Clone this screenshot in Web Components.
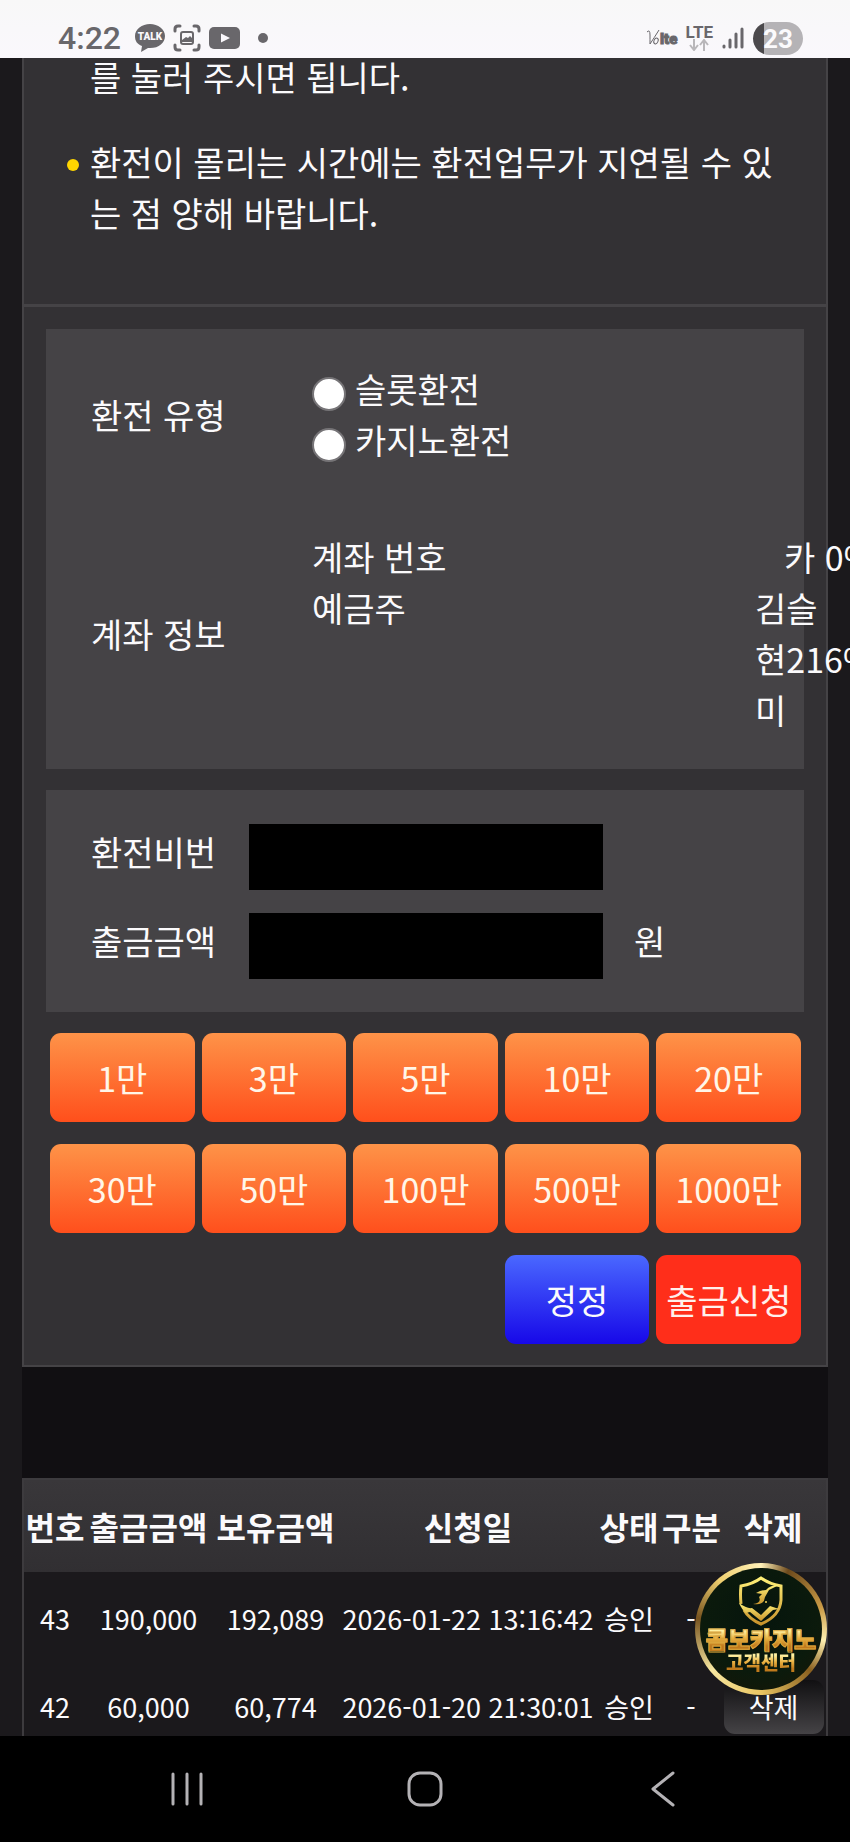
<!DOCTYPE html>
<html lang="ko">
<head>
<meta charset="utf-8">
<meta name="viewport" content="width=device-width, initial-scale=1">
<title>환전 신청</title>
<style>
  html, body { margin: 0; height: 100%; background: #1b191c; }
  body {
    font-family: "Noto Sans CJK KR", "Noto Sans", sans-serif;
    font-size: 34px;
    line-height: 51px;
    color: #fbfafc;
    --frame: #333134;
    --panel: #454346;
    --line: #454346;
  }
</style>
</head>
<body>
<app-shell>
  <status-bar slot="top"></status-bar>
  <page-frame>
    <notice-list>
      <notice-item plain>를 눌러 주시면 됩니다.</notice-item>
      <notice-item>환전이 몰리는 시간에는 환전업무가 지연될 수 있는 점 양해 바랍니다.</notice-item>
    </notice-list>
    <withdraw-form></withdraw-form>
  </page-frame>
  <history-table></history-table>
  <support-badge slot="float"></support-badge>
  <nav-bar slot="bottom"></nav-bar>
</app-shell>

<script>
const define = (name, html, setup) => {
  const template = document.createElement('template');
  template.innerHTML = html;
  customElements.define(name, class extends HTMLElement {
    constructor() {
      super();
      const root = this.attachShadow({ mode: 'open' });
      root.append(template.content.cloneNode(true));
      if (setup) setup(this, root);
    }
  });
};

define('app-shell', `
  <style>
    :host { display: flex; flex-direction: column; height: 100vh; overflow: hidden; }
    main { flex: 1; min-height: 0; overflow: hidden; position: relative; }
    .content { margin: -7px 22px 0; background: #110f12; }
    .float { position: absolute; right: 23px; bottom: 41px; }
  </style>
  <slot name="top"></slot>
  <main>
    <div class="content"><slot></slot></div>
    <div class="float"><slot name="float"></slot></div>
  </main>
  <slot name="bottom"></slot>`);

define('status-bar', `
  <style>
    :host {
      display: flex; align-items: center; justify-content: space-between;
      box-sizing: border-box; height: 58px; padding: 18px 47px 0 58px;
      background: linear-gradient(#f8f8f8, #faf8fc); color: #69676b;
      font-family: Roboto, sans-serif; line-height: 40px;
      position: relative; z-index: 1;
    }
    .group { display: flex; align-items: center; }
    .time { font-size: 32px; font-weight: 500; }
    svg { display: block; }
    .talk { margin-left: 14px; }
    .shot { margin-left: 8px; }
    .tube { margin-left: 8px; }
    .dot { width: 10px; height: 10px; border-radius: 50%; background: #69676b; margin-left: 18px; }
    .lte { margin: 0 9px 0 7px; display: grid; justify-items: center; font-size: 17px; font-weight: 700; line-height: 14px; }
    .battery {
      margin-left: 8px; width: 50px; height: 33px; border-radius: 17px; box-sizing: border-box;
      padding-left: 10px; line-height: 34px; font-size: 26px; font-weight: 700; color: #fbfafc;
      background: linear-gradient(90deg, #4b494c 11px, #b5b3b6 11px);
    }
  </style>
  <div class="group">
    <span class="time">4:22</span>
    <svg class="talk" width="30" height="28" viewBox="0 0 30 28">
      <path d="M15 0C7 0 0 5 0 12c0 5 2 8 7 10l-1 6 7-4c10 1 17-5 17-12S23 0 15 0z" fill="#69676b"/>
      <text x="15" y="16" font-family="Roboto" font-size="10" font-weight="900" fill="#faf8fc" text-anchor="middle">TALK</text>
    </svg>
    <svg class="shot" width="28" height="28" viewBox="0 0 28 28" fill="none" stroke="#69676b" stroke-width="3" stroke-linecap="round">
      <path d="M2 7V5q0-3 3-3h2M21 2h2q3 0 3 3v2M26 21v2q0 3-3 3h-2M7 26H5q-3 0-3-3v-2"/>
      <rect x="8" y="8" width="12" height="12" rx="2" stroke-width="2"/>
      <path d="M9 18v-2l4-3 2 1 2-2 2 2v4z" fill="#69676b" stroke="none"/>
    </svg>
    <svg class="tube" width="31" height="22" viewBox="0 0 31 22">
      <rect width="31" height="22" rx="5" fill="#69676b"/>
      <path d="M12 6.500l9 4.500-9 4.500z" fill="#faf8fc"/>
    </svg>
    <span class="dot"></span>
  </div>
  <div class="group">
    <svg width="33" height="18" viewBox="0 0 33 18" fill="#69676b">
      <path d="M1 3q3-3 3 3 0 5 0 9Q8 9 13 1" fill="none" stroke="#69676b" stroke-width="1"/>
      <ellipse cx="10" cy="12" rx="2" ry="3" fill="none" stroke="#69676b" transform="rotate(25 10 12)"/>
      <text x="14" y="15" font-family="Roboto" font-size="15" font-weight="900" stroke="#69676b" stroke-width="1">lte</text>
    </svg>
    <div class="lte">
      <span>LTE</span>
      <svg width="20" height="12" viewBox="0 0 20 12" fill="none" stroke="#b9b7ba" stroke-width="2">
        <path d="M5 0v10M1 6l4 5 4-5M15 12V2M11 6l4-5 4 5"/>
      </svg>
    </div>
    <svg width="23" height="24" viewBox="0 0 23 24" stroke="#69676b" stroke-width="3" stroke-linecap="round">
      <path d="M2 20v1M8 14v7M14 8v13M20 3v18"/>
    </svg>
    <div class="battery">23</div>
  </div>`);

define('page-frame', `
  <style>
    :host { display: block; background: var(--frame); border: 2px solid var(--line); border-top: 0; }
  </style>
  <slot></slot>`);

define('notice-list', `
  <style>
    :host { display: flex; flex-direction: column; gap: 34px; padding: 0 44px 66px 43px; border-bottom: 3px solid var(--line); }
  </style>
  <slot></slot>`);

define('notice-item', `
  <style>
    :host { display: grid; grid-template-columns: 12px 1fr; gap: 11px; word-break: break-all; }
    i { width: 12px; height: 12px; border-radius: 50%; background: #ffd600; margin-top: 23px; }
    :host([plain]) i { visibility: hidden; }
  </style>
  <i></i><span><slot></slot></span>`);

define('info-row', `
  <style>
    :host { display: grid; grid-template-columns: 221px minmax(0, 1fr); align-items: center; }
  </style>
  <slot name="name"></slot><div><slot></slot></div>`);

define('cash-field', `
  <style>
    :host { display: grid; grid-template-columns: 158px minmax(0, 354px) auto; align-items: center; }
    label, span { padding-bottom: 12px; }
    span span, ::slotted(span) { padding: 0; }
    span { padding-left: 31px; }
    input {
      box-sizing: border-box; width: 100%; height: 66px; padding: 0 16px; margin: 0;
      border: 0; border-radius: 0; background: #000; color: inherit; font: inherit;
    }
  </style>
  <label for="field"><slot></slot></label>
  <input id="field">
  <span><slot name="unit"></slot></span>`,
  (host, root) => {
    root.querySelector('input').type = host.getAttribute('type') || 'text';
  });

define('pad-button', `
  <style>
    :host { display: block; }
    button {
      display: block; width: 100%; height: 89px; padding: 0; border: 0; border-radius: 11px;
      background: linear-gradient(#fe9348, #ff4f1c); color: #fff6e8; font: inherit; white-space: nowrap;
    }
    :host([kind="reset"]) button { background: linear-gradient(#4a68ff, #1708e8); color: #fbfafc; }
    :host([kind="submit"]) button { background: #ff2e1a; color: #fff0ec; }
  </style>
  <button type="button"><slot></slot></button>`);

define('withdraw-form', `
  <style>
    :host { display: block; padding: 22px 22px 21px; }
    form { display: grid; gap: 21px; }
    section { background: var(--panel); padding: 34px 0 34px 45px; display: grid; gap: 66px; }
    section.fields { gap: 23px; padding-bottom: 33px; }
    .choice { display: flex; align-items: center; gap: 9px; }
    input {
      appearance: none; box-sizing: border-box; width: 34px; height: 34px; margin: 10px 0 0;
      border: 2px solid #767477; border-radius: 50%; background: #fff;
    }
    dl { margin: 0; display: grid; grid-template-columns: 443px auto; }
    dd { margin: 0; white-space: nowrap; }
    dd.number { padding-left: 29px; }
    .pad { display: grid; grid-template-columns: repeat(5, minmax(0, 1fr)); gap: 22px 7px; padding: 0 3px 0 4px; }
    pad-button[kind="reset"] { grid-column: 4; }
  </style>
  <form>
    <section>
      <info-row>
        <span slot="name">환전 유형</span>
        <label class="choice"><input type="radio" name="kind">슬롯환전</label>
        <label class="choice"><input type="radio" name="kind">카지노환전</label>
      </info-row>
      <info-row>
        <span slot="name">계좌 정보</span>
        <dl>
          <dt>계좌 번호</dt><dd class="number">카 0%</dd>
          <dt>예금주</dt><dd>김슬<br>현216%<br>미</dd>
        </dl>
      </info-row>
    </section>
    <section class="fields">
      <cash-field type="password">환전비번</cash-field>
      <cash-field>출금금액<span slot="unit">원</span></cash-field>
    </section>
    <div class="pad">
      <pad-button>1만</pad-button><pad-button>3만</pad-button><pad-button>5만</pad-button>
      <pad-button>10만</pad-button><pad-button>20만</pad-button>
      <pad-button>30만</pad-button><pad-button>50만</pad-button><pad-button>100만</pad-button>
      <pad-button>500만</pad-button><pad-button>1000만</pad-button>
      <pad-button kind="reset">정정</pad-button><pad-button kind="submit">출금신청</pad-button>
    </div>
  </form>`);

define('history-table', `
  <style>
    :host { display: block; margin-top: 111px; border: 2px solid #3d3b3e; background: #1b191c; }
    table { width: 100%; table-layout: fixed; border-collapse: collapse; text-align: center; white-space: nowrap; }
    th, td { padding: 0; }
    th { height: 92px; font-size: 32px; font-weight: 700; background: linear-gradient(#39373a, #312f32); }
    td { height: 82px; padding-top: 6px; font-size: 27px; line-height: 40px; }
    button {
      width: 100px; height: 54px; padding: 0; border: 0; border-radius: 11px; vertical-align: middle;
      background: linear-gradient(#111012, #454346); color: inherit; font: inherit; margin-left: 1px;
    }
  </style>
  <table>
    <colgroup>
      <col style="width:62px"><col style="width:125px"><col style="width:129px"><col>
      <col style="width:66px"><col style="width:58px"><col style="width:106px">
    </colgroup>
    <thead>
      <tr><th>번호</th><th>출금금액</th><th>보유금액</th><th>신청일</th><th>상태</th><th>구분</th><th>삭제</th></tr>
    </thead>
    <tbody>
      <tr><td>43</td><td>190,000</td><td>192,089</td><td>2026-01-22 13:16:42</td><td>승인</td><td>-</td><td></td></tr>
      <tr><td>42</td><td>60,000</td><td>60,774</td><td>2026-01-20 21:30:01</td><td>승인</td><td>-</td><td><button type="button">삭제</button></td></tr>
    </tbody>
  </table>`);

define('support-badge', `
  <style>
    :host { display: block; }
    a {
      display: flex; flex-direction: column; align-items: center; box-sizing: border-box;
      width: 132px; height: 132px; padding-top: 8px; border-radius: 50%; border: 5px solid transparent;
      background:
        radial-gradient(circle at 50% 40%, #06150d, #0b1a0c 60%, #191505) padding-box,
        conic-gradient(#fff1b8, #6d4a1c 25deg, #c99a45 70deg, #fff0b0 100deg, #8a6020 130deg, #e9c562 180deg, #f7e7a0 230deg, #77531f 280deg, #f0d070 320deg, #fff1b8) border-box;
      text-decoration: none; font-weight: 900; white-space: nowrap;
    }
    b, span {
      font-weight: 900; color: transparent; -webkit-background-clip: text; background-clip: text;
      background-image: linear-gradient(#fff0a0 20%, #e9b040 50%, #c07a1c 80%);
    }
    b { font-size: 24px; line-height: 25px; -webkit-text-stroke: 1px #dca63c; }
    span { font-size: 19px; line-height: 22px; }
    svg { display: block; }
  </style>
  <a href="#support">
    <svg width="46" height="50" viewBox="0 0 46 50" fill="none" stroke="url(#gold)" stroke-width="3">
      <defs>
        <linearGradient id="gold" x1="0" y1="0" x2="0" y2="1">
          <stop offset="0" stop-color="#fff178"/><stop offset="1" stop-color="#c8932c"/>
        </linearGradient>
      </defs>
      <path d="M3 28Q2 18 3 10q12-2 20-8 8 6 20 8v14q-1 16-20 24Q11 43 6 34"/>
      <path d="M1 27q8 6 13 5l9 7 9-9 9 3-6 1-12 11-11-9-4 1Q4 34 1 27z" fill="url(#gold)" stroke="none"/>
      <path d="M41 9q-9 0-13 5-5 0-10 3l6 1-3 3q3 6-6 7 11 2 12-7l4-7z" fill="url(#gold)" stroke="none"/>
      <circle cx="28" cy="26" r="1" stroke="none" fill="#f3d45f"/>
    </svg>
    <b>콤보카지노</b>
    <span>고객센터</span>
  </a>`);

define('nav-bar', `
  <style>
    :host {
      display: grid; grid-template-columns: 1fr 1fr 1fr; align-items: center; justify-items: center;
      height: 106px; padding: 0 68px; background: #000; position: relative; z-index: 1;
    }
    button { padding: 0; border: 0; background: none; height: 48px; width: 48px; display: grid; place-items: center; }
    svg { fill: none; stroke: #b4b2b5; stroke-width: 3; stroke-linecap: round; stroke-linejoin: round; }
  </style>
  <button type="button" aria-label="최근 앱"><svg width="36" height="36"><path d="M4 3v30M18 3v30M32 3v30"/></svg></button>
  <button type="button" aria-label="홈"><svg width="38" height="38"><rect x="3" y="3" width="32" height="32" rx="11"/></svg></button>
  <button type="button" aria-label="뒤로"><svg width="26" height="38"><path d="M23 3L3 19l20 16"/></svg></button>`);
</script>
</body>
</html>
